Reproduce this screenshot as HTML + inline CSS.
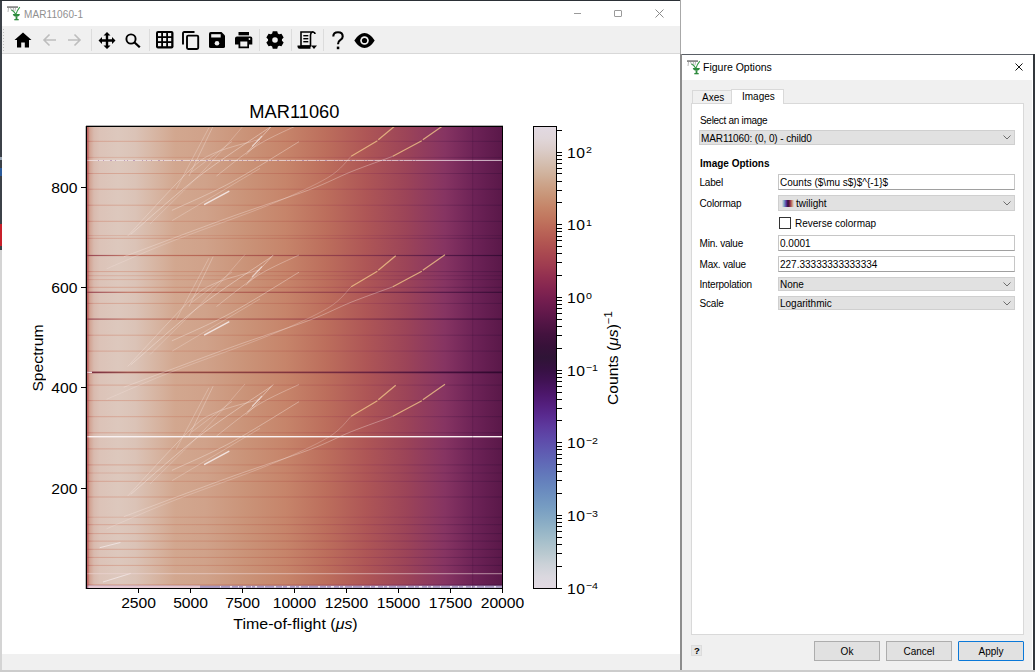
<!DOCTYPE html><html><head><meta charset="utf-8"><style>
*{box-sizing:border-box}
html,body{margin:0;padding:0}
body{width:1035px;height:672px;position:relative;overflow:hidden;background:#fff;font-family:"Liberation Sans", sans-serif}
.a{position:absolute;display:block}
.t{position:absolute;white-space:nowrap;line-height:1}
</style></head><body>
<div class="a" style="left:0px;top:0px;width:2px;height:250px;background:#3c4148"></div>
<div class="a" style="left:0px;top:168px;width:2px;height:8px;background:#2a5a9a"></div>
<div class="a" style="left:0px;top:157px;width:2px;height:3px;background:#9aa6b4"></div>
<div class="a" style="left:0px;top:224px;width:2px;height:22px;background:#c8202a"></div>
<div class="a" style="left:0px;top:250px;width:2px;height:422px;background:#d4d4d4"></div>
<div class="a" style="left:0px;top:0px;width:681px;height:1px;background:#2b3036"></div>
<div class="a" style="left:2px;top:1px;width:678px;height:25px;background:#fff"></div>
<svg class="a" style="left:6px;top:5px" width="15" height="16" viewBox="0 0 15 16">
<rect x="1" y="1.2" width="11" height="1.8" fill="#8a8a8a"/>
<path d="M2.5 3 L2 7 M4.5 3 L6 6 M7.5 3 L7 6 M9.5 3 L9 6" stroke="#b0b0b0" stroke-width="0.9" fill="none"/>
<path d="M10 9 Q11.5 5 13.8 2.2 M9.5 9 Q8 6 5.5 5" stroke="#3a9a4a" stroke-width="1.1" fill="none"/>
<path d="M6.8 9 H13.9 Q13.5 11.8 10.5 11.8 Q7.2 11.8 6.8 9 Z" fill="#2e8b3e"/>
<rect x="9.6" y="11.5" width="1.8" height="3" fill="#2e8b3e"/><rect x="8.3" y="14" width="4.4" height="1.3" fill="#2e8b3e"/>
</svg>
<div class="t" style="left:24px;top:10px;font-size:10px;color:#8f8f8f;letter-spacing:0.1px">MAR11060-1</div>
<div class="a" style="left:574px;top:13px;width:7px;height:1px;background:#9a9a9a"></div>
<div class="a" style="left:614px;top:10px;width:8px;height:7px;border:1px solid #9a9a9a;border-radius:1px"></div>
<svg class="a" style="left:655px;top:9px" width="9" height="9" viewBox="0 0 9 9"><path d="M0.5 0.5 L8.5 8.5 M8.5 0.5 L0.5 8.5" stroke="#8a8a8a" stroke-width="1"/></svg>
<div class="a" style="left:680px;top:0px;width:1px;height:54px;background:#a8a8a8"></div>
<div class="a" style="left:2px;top:26px;width:678px;height:27px;background:#f0f0f0"></div>
<div class="a" style="left:2px;top:53px;width:678px;height:1px;background:#d8d8d8"></div>
<div class="a" style="left:3px;top:29px;width:1px;height:22px;background:repeating-linear-gradient(#bdbdbd 0 1px,transparent 1px 3px)"></div>
<div class="a" style="left:91px;top:29px;width:1px;height:22px;background:#dcdcdc"></div>
<div class="a" style="left:149px;top:29px;width:1px;height:22px;background:#dcdcdc"></div>
<div class="a" style="left:259px;top:29px;width:1px;height:22px;background:#dcdcdc"></div>
<div class="a" style="left:291px;top:29px;width:1px;height:22px;background:#dcdcdc"></div>
<div class="a" style="left:323px;top:29px;width:1px;height:22px;background:#dcdcdc"></div>
<svg class="a" style="left:14px;top:32px" width="18" height="16" viewBox="0 0 18 16"><path d="M9 0.5 L17.5 8 H15 V15.5 H10.8 V10.5 H7.2 V15.5 H3 V8 H0.5 Z" fill="#000"/></svg><svg class="a" style="left:42px;top:33px" width="15" height="14" viewBox="0 0 15 14"><path d="M14 7 H2 M7.5 1.5 L2 7 L7.5 12.5" stroke="#bdbdbd" stroke-width="1.6" fill="none"/></svg><svg class="a" style="left:67px;top:33px" width="15" height="14" viewBox="0 0 15 14"><path d="M1 7 H13 M7.5 1.5 L13 7 L7.5 12.5" stroke="#bdbdbd" stroke-width="1.6" fill="none"/></svg><svg class="a" style="left:98px;top:32px" width="18" height="17" viewBox="0 0 18 17"><path d="M9 0 L12.5 3.5 H10.2 V7.3 H14 V5 L17.5 8.5 L14 12 V9.7 H10.2 V13.5 H12.5 L9 17 L5.5 13.5 H7.8 V9.7 H4 V12 L0.5 8.5 L4 5 V7.3 H7.8 V3.5 H5.5 Z" fill="#000"/></svg><svg class="a" style="left:125px;top:33px" width="16" height="15" viewBox="0 0 16 15"><circle cx="6" cy="6" r="4.6" stroke="#000" stroke-width="1.9" fill="none"/><path d="M9.3 9.3 L14.8 14.3" stroke="#000" stroke-width="2.2"/></svg><svg class="a" style="left:156px;top:31px" width="18" height="18" viewBox="0 0 18 18"><rect x="0" y="0" width="17.5" height="17.5" rx="2" fill="#000"/><rect x="2.0" y="2.0" width="3.2" height="3.2" fill="#f0f0f0"/><rect x="2.0" y="7.0" width="3.2" height="3.2" fill="#f0f0f0"/><rect x="2.0" y="12.0" width="3.2" height="3.2" fill="#f0f0f0"/><rect x="7.0" y="2.0" width="3.2" height="3.2" fill="#f0f0f0"/><rect x="7.0" y="7.0" width="3.2" height="3.2" fill="#f0f0f0"/><rect x="7.0" y="12.0" width="3.2" height="3.2" fill="#f0f0f0"/><rect x="12.0" y="2.0" width="3.2" height="3.2" fill="#f0f0f0"/><rect x="12.0" y="7.0" width="3.2" height="3.2" fill="#f0f0f0"/><rect x="12.0" y="12.0" width="3.2" height="3.2" fill="#f0f0f0"/></svg><svg class="a" style="left:182px;top:31px" width="18" height="19" viewBox="0 0 18 19"><path d="M12.5 1 H2.2 Q1 1 1 2.2 V13.5" stroke="#000" stroke-width="1.9" fill="none"/><rect x="5" y="4.6" width="11.2" height="13.4" rx="1.2" stroke="#000" stroke-width="1.9" fill="none"/></svg><svg class="a" style="left:209px;top:32px" width="17" height="17" viewBox="0 0 17 17"><path d="M1.8 0 H12.5 L16 3.5 V14.4 Q16 16 14.4 16 H1.8 Q0 16 0 14.4 V1.6 Q0 0 1.8 0 Z" fill="#000"/><rect x="2.2" y="2.2" width="9.5" height="3.3" fill="#f0f0f0"/><circle cx="8" cy="11.3" r="2.3" fill="#f0f0f0"/></svg><svg class="a" style="left:235px;top:32px" width="18" height="17" viewBox="0 0 18 17"><rect x="3.5" y="0" width="10.5" height="3.3" fill="#000"/><path d="M2 4.5 H15.5 Q17.3 4.5 17.3 6.3 V12.6 H14 V16.3 H3.5 V12.6 H0 V6.3 Q0 4.5 2 4.5 Z" fill="#000"/><rect x="5.3" y="9.5" width="7" height="5" fill="#f0f0f0"/><circle cx="14.5" cy="7" r="0.9" fill="#f0f0f0"/></svg><svg class="a" style="left:266px;top:31px" width="18" height="18" viewBox="0 0 18 18"><polygon points="6.77,0.28 11.23,0.28 11.85,2.61 13.11,3.33 15.44,2.71 17.67,6.57 15.96,8.28 15.96,9.72 17.67,11.43 15.44,15.29 13.11,14.67 11.85,15.39 11.23,17.72 6.77,17.72 6.15,15.39 4.89,14.67 2.56,15.29 0.33,11.43 2.04,9.72 2.04,8.28 0.33,6.57 2.56,2.71 4.89,3.33 6.15,2.61" fill="#000"/><circle cx="9" cy="9" r="2.8" fill="#f0f0f0"/></svg><svg class="a" style="left:297px;top:31px" width="21" height="19" viewBox="0 0 21 19"><path d="M4 1 H15 Q13.5 2.5 13.5 4 V15 H4 Z" fill="none" stroke="#000" stroke-width="1.6"/><path d="M15 1 Q18 1 18 3" stroke="#000" stroke-width="1.6" fill="none"/><rect x="6.3" y="4" width="5" height="1.4" fill="#000"/><rect x="6.3" y="7" width="5" height="1.4" fill="#000"/><rect x="6.3" y="10" width="5" height="1.4" fill="#000"/><path d="M0.5 14.5 H13.5 V17.8 H2.5 Q0.5 17.8 0.5 15.5 Z" fill="#000"/><path d="M14 14.5 H20 L17 18 Z" fill="#000"/></svg><svg class="a" style="left:331px;top:31px" width="14" height="19" viewBox="0 0 14 19"><path d="M2.3 5.6 Q2.3 1.2 7 1.2 Q11.7 1.2 11.7 5.4 Q11.7 7.6 9.2 9.2 Q7 10.6 7 13.2" stroke="#000" stroke-width="2.1" fill="none"/><rect x="5.8" y="15.6" width="2.5" height="2.6" fill="#000"/></svg><svg class="a" style="left:354px;top:33px" width="21" height="15" viewBox="0 0 21 15"><path d="M0.3 7.5 Q5 0 10.5 0 Q16 0 20.7 7.5 Q16 15 10.5 15 Q5 15 0.3 7.5 Z" fill="#000"/><circle cx="10.5" cy="7.5" r="4.3" fill="#f0f0f0"/><circle cx="10.5" cy="7.5" r="2.6" fill="#000"/></svg>
<div class="a" style="left:2px;top:54px;width:678px;height:600px;background:#fff"></div>
<div class="a" style="left:2px;top:654px;width:678px;height:16px;background:#f0f0f0"></div>
<div class="a" style="left:2px;top:670px;width:678px;height:2px;background:#d0d0d0"></div>
<svg class="a" width="416" height="462" viewBox="86 126 416 462" style="left:86px;top:126px"><defs><linearGradient id="hg" gradientUnits="userSpaceOnUse" x1="86" y1="0" x2="502" y2="0"><stop offset="0.0000" stop-color="#b85a58"/><stop offset="0.0036" stop-color="#c67868"/><stop offset="0.0096" stop-color="#d2a494"/><stop offset="0.0192" stop-color="#d9baae"/><stop offset="0.0337" stop-color="#dcc3b8"/><stop offset="0.0769" stop-color="#ddc8bd"/><stop offset="0.1178" stop-color="#dbc3b7"/><stop offset="0.1538" stop-color="#d8b9a8"/><stop offset="0.2139" stop-color="#d2a78f"/><stop offset="0.2861" stop-color="#d0a28a"/><stop offset="0.3846" stop-color="#ca9378"/><stop offset="0.4808" stop-color="#c6846a"/><stop offset="0.5769" stop-color="#bc6e5c"/><stop offset="0.6731" stop-color="#ae5656"/><stop offset="0.7692" stop-color="#9c4458"/><stop offset="0.8029" stop-color="#943e5c"/><stop offset="0.8630" stop-color="#863462"/><stop offset="0.9351" stop-color="#6c2256"/><stop offset="1.0000" stop-color="#5a1849"/></linearGradient><linearGradient id="hd" gradientUnits="userSpaceOnUse" x1="86" y1="0" x2="502" y2="0"><stop offset="0.0000" stop-color="#a84850"/><stop offset="0.0192" stop-color="#cc806c"/><stop offset="0.1010" stop-color="#d08870"/><stop offset="0.1923" stop-color="#c87e66"/><stop offset="0.2885" stop-color="#c4765e"/><stop offset="0.3846" stop-color="#be6c56"/><stop offset="0.4808" stop-color="#b45e50"/><stop offset="0.5769" stop-color="#a84c50"/><stop offset="0.6731" stop-color="#963c52"/><stop offset="0.7692" stop-color="#7c2c52"/><stop offset="0.8510" stop-color="#642050"/><stop offset="0.9351" stop-color="#4a1444"/><stop offset="1.0000" stop-color="#3c0e3a"/></linearGradient><linearGradient id="hd2" gradientUnits="userSpaceOnUse" x1="86" y1="0" x2="502" y2="0"><stop offset="0.0000" stop-color="#903848"/><stop offset="0.1010" stop-color="#c07060"/><stop offset="0.2885" stop-color="#b4604e"/><stop offset="0.4808" stop-color="#a04848"/><stop offset="0.6731" stop-color="#80304a"/><stop offset="0.8510" stop-color="#501646"/><stop offset="1.0000" stop-color="#320a32"/></linearGradient><clipPath id="axc"><rect x="86" y="126" width="416" height="462"/></clipPath></defs><g clip-path="url(#axc)"><rect x="86" y="126" width="416" height="462" fill="url(#hg)"/><rect x="86" y="140.8" width="416" height="1" fill="url(#hd)" opacity="0.5"/><rect x="86" y="156.9" width="416" height="1" fill="url(#hd)" opacity="0.35"/><rect x="86" y="173.0" width="416" height="1" fill="url(#hd)" opacity="0.5"/><rect x="86" y="188.7" width="416" height="1" fill="url(#hd)" opacity="0.5"/><rect x="86" y="204.7" width="416" height="1" fill="url(#hd)" opacity="0.5"/><rect x="86" y="220.8" width="416" height="1" fill="url(#hd)" opacity="0.5"/><rect x="86" y="235.1" width="416" height="1" fill="url(#hd)" opacity="0.35"/><rect x="86" y="237.8" width="416" height="1" fill="url(#hd)" opacity="0.5"/><rect x="86" y="254.9" width="416" height="1.2" fill="url(#hd2)" opacity="0.9"/><rect x="86" y="271.1" width="416" height="1" fill="url(#hd)" opacity="0.5"/><rect x="86" y="275.2" width="416" height="1" fill="url(#hd)" opacity="0.35"/><rect x="86" y="279.1" width="416" height="1" fill="url(#hd)" opacity="0.35"/><rect x="86" y="286.8" width="416" height="1" fill="url(#hd)" opacity="0.5"/><rect x="86" y="291.7" width="416" height="1.2" fill="url(#hd2)" opacity="0.9"/><rect x="86" y="302.9" width="416" height="1" fill="url(#hd)" opacity="0.5"/><rect x="86" y="318.5" width="416" height="1.2" fill="url(#hd2)" opacity="0.9"/><rect x="86" y="334.7" width="416" height="1" fill="url(#hd)" opacity="0.5"/><rect x="86" y="350.6" width="416" height="1" fill="url(#hd)" opacity="0.5"/><rect x="86" y="371.5" width="416" height="1.8" fill="url(#hd2)"/><rect x="86" y="371.9" width="416" height="1" fill="#300828" opacity="0.3"/><rect x="86" y="384.6" width="416" height="1" fill="url(#hd)" opacity="0.5"/><rect x="86" y="400.1" width="416" height="1" fill="url(#hd)" opacity="0.5"/><rect x="86" y="416.2" width="416" height="1" fill="url(#hd)" opacity="0.5"/><rect x="86" y="432.3" width="416" height="1" fill="url(#hd)" opacity="0.5"/><rect x="86" y="448.4" width="416" height="1" fill="url(#hd)" opacity="0.5"/><rect x="86" y="464.4" width="416" height="1" fill="url(#hd)" opacity="0.5"/><rect x="86" y="472.5" width="416" height="1" fill="url(#hd)" opacity="0.35"/><rect x="86" y="480.8" width="416" height="1" fill="url(#hd)" opacity="0.5"/><rect x="86" y="496.5" width="416" height="1" fill="url(#hd)" opacity="0.5"/><rect x="86" y="516.7" width="416" height="1" fill="url(#hd)" opacity="0.35"/><rect x="86" y="524.2" width="416" height="1" fill="url(#hd)" opacity="0.5"/><rect x="86" y="533.1" width="416" height="1" fill="url(#hd)" opacity="0.5"/><rect x="86" y="540.6" width="416" height="1" fill="url(#hd)" opacity="0.5"/><rect x="86" y="548.8" width="416" height="1" fill="url(#hd)" opacity="0.5"/><rect x="86" y="556.9" width="416" height="1" fill="url(#hd)" opacity="0.5"/><rect x="86" y="564.9" width="416" height="1" fill="url(#hd)" opacity="0.5"/><g transform="translate(0,124.0)"><path d="M106.6 144.8 C117.5 140.2 144.7 128.0 171.9 117.3 C199.1 106.6 244.0 91.2 270.0 80.6 C296.0 70.0 314.5 61.5 328.0 53.5 C341.5 45.5 347.3 35.8 351.2 32.3" stroke="#f6e6e0" stroke-width="0.9" opacity="0.30" fill="none"/><path d="M123.8 132.7 C141.6 126.1 199.8 104.1 230.6 93.0 C261.4 81.9 288.6 73.5 308.7 66.0 C328.8 58.5 337.2 53.3 351.2 47.7 C365.2 42.1 385.9 34.9 392.8 32.3" stroke="#f6e6e0" stroke-width="0.9" opacity="0.40" fill="none"/><path d="M130.7 110.4 C142.1 100.7 175.9 70.0 199.4 52.0 C222.9 34.0 259.5 10.5 271.5 2.2" stroke="#f6e6e0" stroke-width="0.9" opacity="0.50" fill="none"/><path d="M171.9 86.4 C181.6 81.8 209.1 70.3 230.3 58.9 C251.5 47.4 287.6 24.6 299.0 17.7" stroke="#f6e6e0" stroke-width="0.9" opacity="0.45" fill="none"/><path d="M189.0 52.0 C193.0 43.7 209.1 10.5 213.1 2.2" stroke="#f6e6e0" stroke-width="0.9" opacity="0.40" fill="none"/><path d="M247.5 28.0 C251.8 23.4 268.9 5.1 273.2 0.5" stroke="#f6e6e0" stroke-width="0.9" opacity="0.55" fill="none"/><path d="M216.5 52.0 C223.4 46.8 244.1 29.6 257.8 21.0 C271.6 12.4 292.1 3.9 299.0 0.5" stroke="#f6e6e0" stroke-width="0.9" opacity="0.40" fill="none"/><path d="M150.0 100.0 C159.2 90.8 189.2 61.7 205.0 45.0 C220.8 28.3 238.3 7.5 245.0 0.0" stroke="#f6e6e0" stroke-width="0.9" opacity="0.30" fill="none"/><path d="M176.0 65.6 C181.5 55.3 203.4 14.0 208.9 3.7" stroke="#f6e6e0" stroke-width="0.9" opacity="0.35" fill="none"/><path d="M191.5 48.2 C198.3 43.1 225.3 22.5 232.1 17.3" stroke="#f6e6e0" stroke-width="0.9" opacity="0.35" fill="none"/><path d="M127.7 112.0 C137.7 101.4 173.2 62.1 187.7 48.2 C202.2 34.4 202.6 34.4 214.7 28.9 C226.8 23.4 252.4 17.6 260.0 15.3" stroke="#f6e6e0" stroke-width="0.9" opacity="0.40" fill="none"/><path d="M172.2 96.6 C182.5 90.5 219.5 68.5 234.1 59.8 C248.7 51.1 255.7 47.0 260.0 44.4" stroke="#f6e6e0" stroke-width="0.9" opacity="0.35" fill="none"/><path d="M245.7 30.8 C248.1 28.6 257.6 19.6 260.0 17.3" stroke="#f6e6e0" stroke-width="0.9" opacity="0.40" fill="none"/><path d="M351.2 32.3 L377.4 16.8" stroke="#f0c688" stroke-width="1.2" opacity="0.8" fill="none"/><path d="M378.3 15.8 L395.7 1.3" stroke="#f0c688" stroke-width="1.2" opacity="0.8" fill="none"/><path d="M392.8 32.3 L421.8 16.8" stroke="#f0c688" stroke-width="1.2" opacity="0.8" fill="none"/><path d="M422.8 15.8 L445.0 0.3" stroke="#f0c688" stroke-width="1.2" opacity="0.8" fill="none"/><path d="M204.1 80.6 L229.3 67.1" stroke="#f8f0f0" stroke-width="1.3" opacity="0.85" fill="none"/><path d="M252 22.5 L262 12" stroke="#f8f0f0" stroke-width="1.1" opacity="0.6" fill="none"/></g><g transform="translate(0,254.5)"><path d="M106.6 144.8 C117.5 140.2 144.7 128.0 171.9 117.3 C199.1 106.6 244.0 91.2 270.0 80.6 C296.0 70.0 314.5 61.5 328.0 53.5 C341.5 45.5 347.3 35.8 351.2 32.3" stroke="#f6e6e0" stroke-width="0.9" opacity="0.30" fill="none"/><path d="M123.8 132.7 C141.6 126.1 199.8 104.1 230.6 93.0 C261.4 81.9 288.6 73.5 308.7 66.0 C328.8 58.5 337.2 53.3 351.2 47.7 C365.2 42.1 385.9 34.9 392.8 32.3" stroke="#f6e6e0" stroke-width="0.9" opacity="0.40" fill="none"/><path d="M130.7 110.4 C142.1 100.7 175.9 70.0 199.4 52.0 C222.9 34.0 259.5 10.5 271.5 2.2" stroke="#f6e6e0" stroke-width="0.9" opacity="0.50" fill="none"/><path d="M171.9 86.4 C181.6 81.8 209.1 70.3 230.3 58.9 C251.5 47.4 287.6 24.6 299.0 17.7" stroke="#f6e6e0" stroke-width="0.9" opacity="0.45" fill="none"/><path d="M189.0 52.0 C193.0 43.7 209.1 10.5 213.1 2.2" stroke="#f6e6e0" stroke-width="0.9" opacity="0.40" fill="none"/><path d="M247.5 28.0 C251.8 23.4 268.9 5.1 273.2 0.5" stroke="#f6e6e0" stroke-width="0.9" opacity="0.55" fill="none"/><path d="M216.5 52.0 C223.4 46.8 244.1 29.6 257.8 21.0 C271.6 12.4 292.1 3.9 299.0 0.5" stroke="#f6e6e0" stroke-width="0.9" opacity="0.40" fill="none"/><path d="M150.0 100.0 C159.2 90.8 189.2 61.7 205.0 45.0 C220.8 28.3 238.3 7.5 245.0 0.0" stroke="#f6e6e0" stroke-width="0.9" opacity="0.30" fill="none"/><path d="M176.0 65.6 C181.5 55.3 203.4 14.0 208.9 3.7" stroke="#f6e6e0" stroke-width="0.9" opacity="0.35" fill="none"/><path d="M191.5 48.2 C198.3 43.1 225.3 22.5 232.1 17.3" stroke="#f6e6e0" stroke-width="0.9" opacity="0.35" fill="none"/><path d="M127.7 112.0 C137.7 101.4 173.2 62.1 187.7 48.2 C202.2 34.4 202.6 34.4 214.7 28.9 C226.8 23.4 252.4 17.6 260.0 15.3" stroke="#f6e6e0" stroke-width="0.9" opacity="0.40" fill="none"/><path d="M172.2 96.6 C182.5 90.5 219.5 68.5 234.1 59.8 C248.7 51.1 255.7 47.0 260.0 44.4" stroke="#f6e6e0" stroke-width="0.9" opacity="0.35" fill="none"/><path d="M245.7 30.8 C248.1 28.6 257.6 19.6 260.0 17.3" stroke="#f6e6e0" stroke-width="0.9" opacity="0.40" fill="none"/><path d="M351.2 32.3 L377.4 16.8" stroke="#f0c688" stroke-width="1.2" opacity="0.8" fill="none"/><path d="M378.3 15.8 L395.7 1.3" stroke="#f0c688" stroke-width="1.2" opacity="0.8" fill="none"/><path d="M392.8 32.3 L421.8 16.8" stroke="#f0c688" stroke-width="1.2" opacity="0.8" fill="none"/><path d="M422.8 15.8 L445.0 0.3" stroke="#f0c688" stroke-width="1.2" opacity="0.8" fill="none"/><path d="M204.1 80.6 L229.3 67.1" stroke="#f8f0f0" stroke-width="1.3" opacity="0.85" fill="none"/><path d="M252 22.5 L262 12" stroke="#f8f0f0" stroke-width="1.1" opacity="0.6" fill="none"/></g><g transform="translate(0,384.0)"><path d="M106.6 144.8 C117.5 140.2 144.7 128.0 171.9 117.3 C199.1 106.6 244.0 91.2 270.0 80.6 C296.0 70.0 314.5 61.5 328.0 53.5 C341.5 45.5 347.3 35.8 351.2 32.3" stroke="#f6e6e0" stroke-width="0.9" opacity="0.30" fill="none"/><path d="M123.8 132.7 C141.6 126.1 199.8 104.1 230.6 93.0 C261.4 81.9 288.6 73.5 308.7 66.0 C328.8 58.5 337.2 53.3 351.2 47.7 C365.2 42.1 385.9 34.9 392.8 32.3" stroke="#f6e6e0" stroke-width="0.9" opacity="0.40" fill="none"/><path d="M130.7 110.4 C142.1 100.7 175.9 70.0 199.4 52.0 C222.9 34.0 259.5 10.5 271.5 2.2" stroke="#f6e6e0" stroke-width="0.9" opacity="0.50" fill="none"/><path d="M171.9 86.4 C181.6 81.8 209.1 70.3 230.3 58.9 C251.5 47.4 287.6 24.6 299.0 17.7" stroke="#f6e6e0" stroke-width="0.9" opacity="0.45" fill="none"/><path d="M189.0 52.0 C193.0 43.7 209.1 10.5 213.1 2.2" stroke="#f6e6e0" stroke-width="0.9" opacity="0.40" fill="none"/><path d="M247.5 28.0 C251.8 23.4 268.9 5.1 273.2 0.5" stroke="#f6e6e0" stroke-width="0.9" opacity="0.55" fill="none"/><path d="M216.5 52.0 C223.4 46.8 244.1 29.6 257.8 21.0 C271.6 12.4 292.1 3.9 299.0 0.5" stroke="#f6e6e0" stroke-width="0.9" opacity="0.40" fill="none"/><path d="M150.0 100.0 C159.2 90.8 189.2 61.7 205.0 45.0 C220.8 28.3 238.3 7.5 245.0 0.0" stroke="#f6e6e0" stroke-width="0.9" opacity="0.30" fill="none"/><path d="M176.0 65.6 C181.5 55.3 203.4 14.0 208.9 3.7" stroke="#f6e6e0" stroke-width="0.9" opacity="0.35" fill="none"/><path d="M191.5 48.2 C198.3 43.1 225.3 22.5 232.1 17.3" stroke="#f6e6e0" stroke-width="0.9" opacity="0.35" fill="none"/><path d="M127.7 112.0 C137.7 101.4 173.2 62.1 187.7 48.2 C202.2 34.4 202.6 34.4 214.7 28.9 C226.8 23.4 252.4 17.6 260.0 15.3" stroke="#f6e6e0" stroke-width="0.9" opacity="0.40" fill="none"/><path d="M172.2 96.6 C182.5 90.5 219.5 68.5 234.1 59.8 C248.7 51.1 255.7 47.0 260.0 44.4" stroke="#f6e6e0" stroke-width="0.9" opacity="0.35" fill="none"/><path d="M245.7 30.8 C248.1 28.6 257.6 19.6 260.0 17.3" stroke="#f6e6e0" stroke-width="0.9" opacity="0.40" fill="none"/><path d="M351.2 32.3 L377.4 16.8" stroke="#f0c688" stroke-width="1.2" opacity="0.8" fill="none"/><path d="M378.3 15.8 L395.7 1.3" stroke="#f0c688" stroke-width="1.2" opacity="0.8" fill="none"/><path d="M392.8 32.3 L421.8 16.8" stroke="#f0c688" stroke-width="1.2" opacity="0.8" fill="none"/><path d="M422.8 15.8 L445.0 0.3" stroke="#f0c688" stroke-width="1.2" opacity="0.8" fill="none"/><path d="M204.1 80.6 L229.3 67.1" stroke="#f8f0f0" stroke-width="1.3" opacity="0.85" fill="none"/><path d="M252 22.5 L262 12" stroke="#f8f0f0" stroke-width="1.1" opacity="0.6" fill="none"/></g><path d="M99.7 547.7 L120.4 542.5 M103 582 L130.7 573.4" stroke="#f4eaea" stroke-width="1" opacity="0.75" fill="none"/><rect x="86" y="159.9" width="416" height="1.1" fill="#f4e8ec" opacity="0.7"/><path d="M98 160.45 H420" stroke="#9a6c9c" stroke-width="1.1" stroke-dasharray="1 4 1 6 2 3 1 8 1 2 1 5 2 7 1 3" opacity="0.55"/><rect x="86" y="436" width="416" height="1.4" fill="#faf2f2"/><rect x="86" y="573.2" width="416" height="1" fill="#eed8d8" opacity="0.6"/><rect x="86" y="371.6" width="6" height="1.5" fill="#f0e0e0"/><rect x="86" y="584.6" width="416" height="1" fill="url(#hd)"/><rect x="86" y="585.6" width="416" height="2.4" fill="#a898c0"/><rect x="88" y="585.6" width="112" height="2.4" fill="#e4c8d2"/><path d="M220 586.8 H502" stroke="#f4f0f6" stroke-width="1.4" stroke-dasharray="1 9 2 6 1 4 3 5 1 3 2 7" opacity="0.9"/><rect x="86" y="126" width="2.5" height="462" fill="#b04858" opacity="0.45"/><rect x="472" y="126" width="1.2" height="462" fill="#3a0e38" opacity="0.2"/></g></svg>
<div class="a" style="left:86px;top:126px;width:417px;height:463px;border:1px solid #000"></div>
<div class="a" style="left:85px;top:126px;width:1px;height:463px;background:#000;opacity:0.25"></div>
<div class="a" style="left:86px;top:125px;width:417px;height:1px;background:#000;opacity:0.3"></div>
<div class="a" style="left:138px;top:589px;width:1px;height:4px;background:#000"></div>
<div class="t" style="left:138.3px;top:596px;width:80px;margin-left:-40px;text-align:center;font-size:14px;color:#000"><span style="display:inline-block;transform:scaleX(1.12)">2500</span></div>
<div class="a" style="left:190px;top:589px;width:1px;height:4px;background:#000"></div>
<div class="t" style="left:190.3px;top:596px;width:80px;margin-left:-40px;text-align:center;font-size:14px;color:#000"><span style="display:inline-block;transform:scaleX(1.12)">5000</span></div>
<div class="a" style="left:242px;top:589px;width:1px;height:4px;background:#000"></div>
<div class="t" style="left:242.2px;top:596px;width:80px;margin-left:-40px;text-align:center;font-size:14px;color:#000"><span style="display:inline-block;transform:scaleX(1.12)">7500</span></div>
<div class="a" style="left:294px;top:589px;width:1px;height:4px;background:#000"></div>
<div class="t" style="left:294.2px;top:596px;width:80px;margin-left:-40px;text-align:center;font-size:14px;color:#000"><span style="display:inline-block;transform:scaleX(1.12)">10000</span></div>
<div class="a" style="left:346px;top:589px;width:1px;height:4px;background:#000"></div>
<div class="t" style="left:346.1px;top:596px;width:80px;margin-left:-40px;text-align:center;font-size:14px;color:#000"><span style="display:inline-block;transform:scaleX(1.12)">12500</span></div>
<div class="a" style="left:398px;top:589px;width:1px;height:4px;background:#000"></div>
<div class="t" style="left:398.1px;top:596px;width:80px;margin-left:-40px;text-align:center;font-size:14px;color:#000"><span style="display:inline-block;transform:scaleX(1.12)">15000</span></div>
<div class="a" style="left:450px;top:589px;width:1px;height:4px;background:#000"></div>
<div class="t" style="left:450.1px;top:596px;width:80px;margin-left:-40px;text-align:center;font-size:14px;color:#000"><span style="display:inline-block;transform:scaleX(1.12)">17500</span></div>
<div class="a" style="left:502px;top:589px;width:1px;height:4px;background:#000"></div>
<div class="t" style="left:502.0px;top:596px;width:80px;margin-left:-40px;text-align:center;font-size:14px;color:#000"><span style="display:inline-block;transform:scaleX(1.12)">20000</span></div>
<div class="a" style="left:81px;top:488px;width:5px;height:1px;background:#000"></div>
<div class="t" style="left:0px;width:77px;top:481.5px;text-align:right;font-size:14px;color:#000"><span style="display:inline-block;transform:scaleX(1.12);transform-origin:right">200</span></div>
<div class="a" style="left:81px;top:387px;width:5px;height:1px;background:#000"></div>
<div class="t" style="left:0px;width:77px;top:381.3px;text-align:right;font-size:14px;color:#000"><span style="display:inline-block;transform:scaleX(1.12);transform-origin:right">400</span></div>
<div class="a" style="left:81px;top:287px;width:5px;height:1px;background:#000"></div>
<div class="t" style="left:0px;width:77px;top:281.1px;text-align:right;font-size:14px;color:#000"><span style="display:inline-block;transform:scaleX(1.12);transform-origin:right">600</span></div>
<div class="a" style="left:81px;top:187px;width:5px;height:1px;background:#000"></div>
<div class="t" style="left:0px;width:77px;top:180.9px;text-align:right;font-size:14px;color:#000"><span style="display:inline-block;transform:scaleX(1.12);transform-origin:right">800</span></div>
<div class="t" style="left:294.0px;top:103px;width:200px;margin-left:-100px;text-align:center;font-size:18px;color:#000"><span style="display:inline-block;transform:scaleX(1.015)">MAR11060</span></div>
<div class="t" style="left:296.0px;top:616.5px;width:200px;margin-left:-100px;text-align:center;font-size:14px;color:#000"><span style="display:inline-block;transform:scaleX(1.14)">Time-of-flight (<i>&#956;s</i>)</span></div>
<div class="t" style="left:38px;top:358px;width:100px;margin-left:-50px;margin-top:-7px;text-align:center;font-size:14px;color:#000;transform:rotate(-90deg)"><span style="display:inline-block;transform:scaleX(1.12)">Spectrum</span></div>
<svg class="a" width="22" height="461" style="left:534px;top:127px"><defs><linearGradient id="cg" x1="0" y1="0" x2="0" y2="1"><stop offset="0.000" stop-color="#e2d9e2"/><stop offset="0.025" stop-color="#e0d6d9"/><stop offset="0.050" stop-color="#dbccc8"/><stop offset="0.075" stop-color="#d5c0b3"/><stop offset="0.100" stop-color="#d0b39e"/><stop offset="0.125" stop-color="#cca389"/><stop offset="0.150" stop-color="#c89477"/><stop offset="0.175" stop-color="#c58468"/><stop offset="0.200" stop-color="#c0755e"/><stop offset="0.225" stop-color="#ba6557"/><stop offset="0.250" stop-color="#b25652"/><stop offset="0.275" stop-color="#a94850"/><stop offset="0.300" stop-color="#9f3c50"/><stop offset="0.325" stop-color="#922f50"/><stop offset="0.350" stop-color="#842550"/><stop offset="0.375" stop-color="#741e4f"/><stop offset="0.400" stop-color="#64194b"/><stop offset="0.425" stop-color="#531545"/><stop offset="0.450" stop-color="#43123e"/><stop offset="0.475" stop-color="#371139"/><stop offset="0.500" stop-color="#2f1436"/><stop offset="0.525" stop-color="#361142"/><stop offset="0.550" stop-color="#401253"/><stop offset="0.575" stop-color="#4b1668"/><stop offset="0.600" stop-color="#531e7c"/><stop offset="0.625" stop-color="#592a8f"/><stop offset="0.650" stop-color="#5d3a9e"/><stop offset="0.675" stop-color="#5e49a9"/><stop offset="0.700" stop-color="#5f58b0"/><stop offset="0.725" stop-color="#6067b6"/><stop offset="0.750" stop-color="#6276ba"/><stop offset="0.775" stop-color="#6684bd"/><stop offset="0.800" stop-color="#6e91c0"/><stop offset="0.825" stop-color="#779dc2"/><stop offset="0.850" stop-color="#85a9c4"/><stop offset="0.875" stop-color="#95b5c7"/><stop offset="0.900" stop-color="#a7c0cb"/><stop offset="0.925" stop-color="#b9c9d0"/><stop offset="0.950" stop-color="#ccd2d8"/><stop offset="0.975" stop-color="#dad8df"/><stop offset="1.000" stop-color="#e2d9e2"/></linearGradient></defs><rect width="100%" height="100%" fill="url(#cg)"/></svg>
<div class="a" style="left:533px;top:126px;width:24px;height:463px;border:1px solid #000"></div>
<div class="a" style="left:557px;top:588px;width:5px;height:1px;background:#000"></div>
<div class="a" style="left:557px;top:566px;width:5px;height:1px;background:#000"></div>
<div class="a" style="left:557px;top:553px;width:5px;height:1px;background:#000"></div>
<div class="a" style="left:557px;top:544px;width:5px;height:1px;background:#000"></div>
<div class="a" style="left:557px;top:537px;width:5px;height:1px;background:#000"></div>
<div class="a" style="left:557px;top:531px;width:5px;height:1px;background:#000"></div>
<div class="a" style="left:557px;top:526px;width:5px;height:1px;background:#000"></div>
<div class="a" style="left:557px;top:522px;width:5px;height:1px;background:#000"></div>
<div class="a" style="left:557px;top:518px;width:5px;height:1px;background:#000"></div>
<div class="t" style="left:567px;top:581.7px;font-size:14px;color:#000"><span style="display:inline-block;transform:scaleX(1.12);transform-origin:left;letter-spacing:0.4px">10<sup style="font-size:9.5px;vertical-align:0;position:relative;top:-4.5px;left:0.5px;letter-spacing:0">&#8722;4</sup></span></div>
<div class="a" style="left:557px;top:515px;width:5px;height:1px;background:#000"></div>
<div class="a" style="left:557px;top:493px;width:5px;height:1px;background:#000"></div>
<div class="a" style="left:557px;top:480px;width:5px;height:1px;background:#000"></div>
<div class="a" style="left:557px;top:471px;width:5px;height:1px;background:#000"></div>
<div class="a" style="left:557px;top:464px;width:5px;height:1px;background:#000"></div>
<div class="a" style="left:557px;top:458px;width:5px;height:1px;background:#000"></div>
<div class="a" style="left:557px;top:454px;width:5px;height:1px;background:#000"></div>
<div class="a" style="left:557px;top:449px;width:5px;height:1px;background:#000"></div>
<div class="a" style="left:557px;top:446px;width:5px;height:1px;background:#000"></div>
<div class="t" style="left:567px;top:509.0px;font-size:14px;color:#000"><span style="display:inline-block;transform:scaleX(1.12);transform-origin:left;letter-spacing:0.4px">10<sup style="font-size:9.5px;vertical-align:0;position:relative;top:-4.5px;left:0.5px;letter-spacing:0">&#8722;3</sup></span></div>
<div class="a" style="left:557px;top:442px;width:5px;height:1px;background:#000"></div>
<div class="a" style="left:557px;top:420px;width:5px;height:1px;background:#000"></div>
<div class="a" style="left:557px;top:408px;width:5px;height:1px;background:#000"></div>
<div class="a" style="left:557px;top:399px;width:5px;height:1px;background:#000"></div>
<div class="a" style="left:557px;top:392px;width:5px;height:1px;background:#000"></div>
<div class="a" style="left:557px;top:386px;width:5px;height:1px;background:#000"></div>
<div class="a" style="left:557px;top:381px;width:5px;height:1px;background:#000"></div>
<div class="a" style="left:557px;top:377px;width:5px;height:1px;background:#000"></div>
<div class="a" style="left:557px;top:373px;width:5px;height:1px;background:#000"></div>
<div class="t" style="left:567px;top:436.3px;font-size:14px;color:#000"><span style="display:inline-block;transform:scaleX(1.12);transform-origin:left;letter-spacing:0.4px">10<sup style="font-size:9.5px;vertical-align:0;position:relative;top:-4.5px;left:0.5px;letter-spacing:0">&#8722;2</sup></span></div>
<div class="a" style="left:557px;top:370px;width:5px;height:1px;background:#000"></div>
<div class="a" style="left:557px;top:348px;width:5px;height:1px;background:#000"></div>
<div class="a" style="left:557px;top:335px;width:5px;height:1px;background:#000"></div>
<div class="a" style="left:557px;top:326px;width:5px;height:1px;background:#000"></div>
<div class="a" style="left:557px;top:319px;width:5px;height:1px;background:#000"></div>
<div class="a" style="left:557px;top:313px;width:5px;height:1px;background:#000"></div>
<div class="a" style="left:557px;top:308px;width:5px;height:1px;background:#000"></div>
<div class="a" style="left:557px;top:304px;width:5px;height:1px;background:#000"></div>
<div class="a" style="left:557px;top:300px;width:5px;height:1px;background:#000"></div>
<div class="t" style="left:567px;top:363.6px;font-size:14px;color:#000"><span style="display:inline-block;transform:scaleX(1.12);transform-origin:left;letter-spacing:0.4px">10<sup style="font-size:9.5px;vertical-align:0;position:relative;top:-4.5px;left:0.5px;letter-spacing:0">&#8722;1</sup></span></div>
<div class="a" style="left:557px;top:297px;width:5px;height:1px;background:#000"></div>
<div class="a" style="left:557px;top:275px;width:5px;height:1px;background:#000"></div>
<div class="a" style="left:557px;top:262px;width:5px;height:1px;background:#000"></div>
<div class="a" style="left:557px;top:253px;width:5px;height:1px;background:#000"></div>
<div class="a" style="left:557px;top:246px;width:5px;height:1px;background:#000"></div>
<div class="a" style="left:557px;top:240px;width:5px;height:1px;background:#000"></div>
<div class="a" style="left:557px;top:236px;width:5px;height:1px;background:#000"></div>
<div class="a" style="left:557px;top:231px;width:5px;height:1px;background:#000"></div>
<div class="a" style="left:557px;top:228px;width:5px;height:1px;background:#000"></div>
<div class="t" style="left:567px;top:291.0px;font-size:14px;color:#000"><span style="display:inline-block;transform:scaleX(1.12);transform-origin:left;letter-spacing:0.4px">10<sup style="font-size:9.5px;vertical-align:0;position:relative;top:-4.5px;left:0.5px;letter-spacing:0">0</sup></span></div>
<div class="a" style="left:557px;top:224px;width:5px;height:1px;background:#000"></div>
<div class="a" style="left:557px;top:202px;width:5px;height:1px;background:#000"></div>
<div class="a" style="left:557px;top:190px;width:5px;height:1px;background:#000"></div>
<div class="a" style="left:557px;top:181px;width:5px;height:1px;background:#000"></div>
<div class="a" style="left:557px;top:173px;width:5px;height:1px;background:#000"></div>
<div class="a" style="left:557px;top:168px;width:5px;height:1px;background:#000"></div>
<div class="a" style="left:557px;top:163px;width:5px;height:1px;background:#000"></div>
<div class="a" style="left:557px;top:159px;width:5px;height:1px;background:#000"></div>
<div class="a" style="left:557px;top:155px;width:5px;height:1px;background:#000"></div>
<div class="t" style="left:567px;top:218.3px;font-size:14px;color:#000"><span style="display:inline-block;transform:scaleX(1.12);transform-origin:left;letter-spacing:0.4px">10<sup style="font-size:9.5px;vertical-align:0;position:relative;top:-4.5px;left:0.5px;letter-spacing:0">1</sup></span></div>
<div class="a" style="left:557px;top:152px;width:5px;height:1px;background:#000"></div>
<div class="a" style="left:557px;top:130px;width:5px;height:1px;background:#000"></div>
<div class="t" style="left:567px;top:145.6px;font-size:14px;color:#000"><span style="display:inline-block;transform:scaleX(1.12);transform-origin:left;letter-spacing:0.4px">10<sup style="font-size:9.5px;vertical-align:0;position:relative;top:-4.5px;left:0.5px;letter-spacing:0">2</sup></span></div>
<div class="t" style="left:613px;top:358px;width:140px;margin-left:-70px;margin-top:-7px;text-align:center;font-size:14px;color:#000;transform:rotate(-90deg)"><span style="display:inline-block;transform:scaleX(1.12)">Counts (<i>&#956;s</i>)<sup style="font-size:10px;vertical-align:0;position:relative;top:-6px">&#8722;1</sup></span></div>
<div class="a" style="left:681px;top:54px;width:354px;height:618px;background:#f0f0f0"></div>
<div class="a" style="left:681px;top:54px;width:354px;height:1px;background:#5a5f66"></div>
<div class="a" style="left:681px;top:54px;width:1px;height:618px;background:#5a5f66"></div>
<div class="a" style="left:1033px;top:54px;width:2px;height:618px;background:#33373c"></div>
<div class="a" style="left:680px;top:54px;width:2px;height:618px;background:#8c8c8c"></div>
<div class="a" style="left:0px;top:670px;width:1035px;height:2px;background:#cccccc"></div>
<div class="a" style="left:682px;top:55px;width:351px;height:25px;background:#fff"></div>
<svg class="a" style="left:686px;top:59px" width="15" height="16" viewBox="0 0 15 16">
<rect x="1" y="1.2" width="11" height="1.8" fill="#8a8a8a"/>
<path d="M2.5 3 L2 7 M4.5 3 L6 6 M7.5 3 L7 6 M9.5 3 L9 6" stroke="#b0b0b0" stroke-width="0.9" fill="none"/>
<path d="M10 9 Q11.5 5 13.8 2.2 M9.5 9 Q8 6 5.5 5" stroke="#3a9a4a" stroke-width="1.1" fill="none"/>
<path d="M6.8 9 H13.9 Q13.5 11.8 10.5 11.8 Q7.2 11.8 6.8 9 Z" fill="#2e8b3e"/>
<rect x="9.6" y="11.5" width="1.8" height="3" fill="#2e8b3e"/><rect x="8.3" y="14" width="4.4" height="1.3" fill="#2e8b3e"/>
</svg>
<div class="t" style="left:703px;top:62px;font-size:10.5px;color:#000">Figure Options</div>
<svg class="a" style="left:1014.5px;top:62.5px" width="8" height="8" viewBox="0 0 8 8"><path d="M0.5 0.5 L7.5 7.5 M7.5 0.5 L0.5 7.5" stroke="#111" stroke-width="1"/></svg>
<div class="a" style="left:1032px;top:80px;width:1px;height:590px;background:#fff"></div>
<div class="a" style="left:692px;top:90px;width:40px;height:14px;background:#f0f0f0;border:1px solid #d9d9d9;border-bottom:none"></div>
<div class="a" style="left:731px;top:89px;width:53px;height:15px;background:#fff;border:1px solid #d9d9d9;border-bottom:none"></div>
<div class="a" style="left:691px;top:103px;width:333px;height:532px;background:#fff;border:1px solid #d9d9d9"></div>
<div class="a" style="left:732px;top:103px;width:51px;height:1px;background:#fff"></div>
<div class="t" style="left:702px;top:93px;font-size:10px;color:#000">Axes</div>
<div class="t" style="left:742px;top:92px;font-size:10px;color:#000">Images</div>
<div class="t" style="left:700px;top:116px;font-size:10px;color:#000;letter-spacing:-0.3px">Select an image</div>
<div class="a" style="left:699px;top:130px;width:316px;height:15px;background:#e1e1e1;border:1px solid #cfcfcf"></div>
<svg class="a" style="left:1003px;top:135px" width="8" height="5" viewBox="0 0 8 5"><path d="M0.5 0.5 L4 4 L7.5 0.5" stroke="#606060" stroke-width="0.9" fill="none"/></svg>
<div class="t" style="left:701px;top:133.5px;font-size:10px;color:#000;letter-spacing:-0.1px">MAR11060: (0, 0) - child0</div>
<div class="t" style="left:700px;top:158.7px;font-size:10px;font-weight:bold;color:#000">Image Options</div>
<div class="t" style="left:699.5px;top:178px;font-size:10px;color:#000;letter-spacing:-0.2px">Label</div>
<div class="t" style="left:699.5px;top:199px;font-size:10px;color:#000;letter-spacing:-0.2px">Colormap</div>
<div class="t" style="left:699.5px;top:239px;font-size:10px;color:#000;letter-spacing:-0.2px">Min. value</div>
<div class="t" style="left:699.5px;top:260px;font-size:10px;color:#000;letter-spacing:-0.2px">Max. value</div>
<div class="t" style="left:699.5px;top:280px;font-size:10px;color:#000;letter-spacing:-0.2px">Interpolation</div>
<div class="t" style="left:699.5px;top:299px;font-size:10px;color:#000;letter-spacing:-0.2px">Scale</div>
<div class="a" style="left:778px;top:174px;width:237px;height:16px;background:#fff;border:1px solid #c6c6c6;border-bottom-color:#a0a0a0"></div>
<div class="t" style="left:780px;top:178px;font-size:10px;color:#000">Counts ($\mu s$)$^{-1}$</div>
<div class="a" style="left:778px;top:195px;width:237px;height:16px;background:#e1e1e1;border:1px solid #cfcfcf"></div>
<svg class="a" style="left:1003px;top:201px" width="8" height="5" viewBox="0 0 8 5"><path d="M0.5 0.5 L4 4 L7.5 0.5" stroke="#606060" stroke-width="0.9" fill="none"/></svg>
<div class="a" style="left:782px;top:200px;width:12px;height:7px;background:linear-gradient(to right,#e2d9e2,#95b5c7,#6276ba,#592a8f,#2f1436,#741e4f,#b25652,#cca389,#e2d9e2)"></div>
<div class="t" style="left:796px;top:199px;font-size:10px;color:#000">twilight</div>
<div class="a" style="left:779px;top:217px;width:12px;height:12px;background:#fff;border:1px solid #333"></div>
<div class="t" style="left:795px;top:219px;font-size:10px;color:#000">Reverse colormap</div>
<div class="a" style="left:778px;top:235px;width:237px;height:16px;background:#fff;border:1px solid #c6c6c6;border-bottom-color:#a0a0a0"></div>
<div class="t" style="left:780px;top:239px;font-size:10px;color:#000">0.0001</div>
<div class="a" style="left:778px;top:256px;width:237px;height:16px;background:#fff;border:1px solid #c6c6c6;border-bottom-color:#a0a0a0"></div>
<div class="t" style="left:780px;top:260px;font-size:10px;color:#000">227.33333333333334</div>
<div class="a" style="left:778px;top:277px;width:237px;height:14px;background:#e1e1e1;border:1px solid #cfcfcf"></div>
<svg class="a" style="left:1003px;top:282px" width="8" height="5" viewBox="0 0 8 5"><path d="M0.5 0.5 L4 4 L7.5 0.5" stroke="#606060" stroke-width="0.9" fill="none"/></svg>
<div class="t" style="left:780px;top:280px;font-size:10px;color:#000">None</div>
<div class="a" style="left:778px;top:296px;width:237px;height:14px;background:#e1e1e1;border:1px solid #cfcfcf"></div>
<svg class="a" style="left:1003px;top:301px" width="8" height="5" viewBox="0 0 8 5"><path d="M0.5 0.5 L4 4 L7.5 0.5" stroke="#606060" stroke-width="0.9" fill="none"/></svg>
<div class="t" style="left:780px;top:299px;font-size:10px;color:#000">Logarithmic</div>
<div class="a" style="left:691px;top:645px;width:11px;height:11px;background:#e6e6e6;border:1px solid #dcdcdc"></div>
<div class="t" style="left:694px;top:646px;font-size:9.5px;font-weight:bold;color:#000">?</div>
<div class="a" style="left:814px;top:641px;width:66px;height:20px;background:#e1e1e1;border:1px solid #adadad"></div>
<div class="t" style="left:814px;top:646.5px;width:66px;text-align:center;font-size:10px;color:#000">Ok</div>
<div class="a" style="left:886px;top:641px;width:66px;height:20px;background:#e1e1e1;border:1px solid #adadad"></div>
<div class="t" style="left:886px;top:646.5px;width:66px;text-align:center;font-size:10px;color:#000">Cancel</div>
<div class="a" style="left:958px;top:641px;width:66px;height:20px;background:#e1e1e1;border:1.5px solid #0a78d8;border-radius:1px"></div>
<div class="t" style="left:958px;top:646.5px;width:66px;text-align:center;font-size:10px;color:#000">Apply</div>
</body></html>
